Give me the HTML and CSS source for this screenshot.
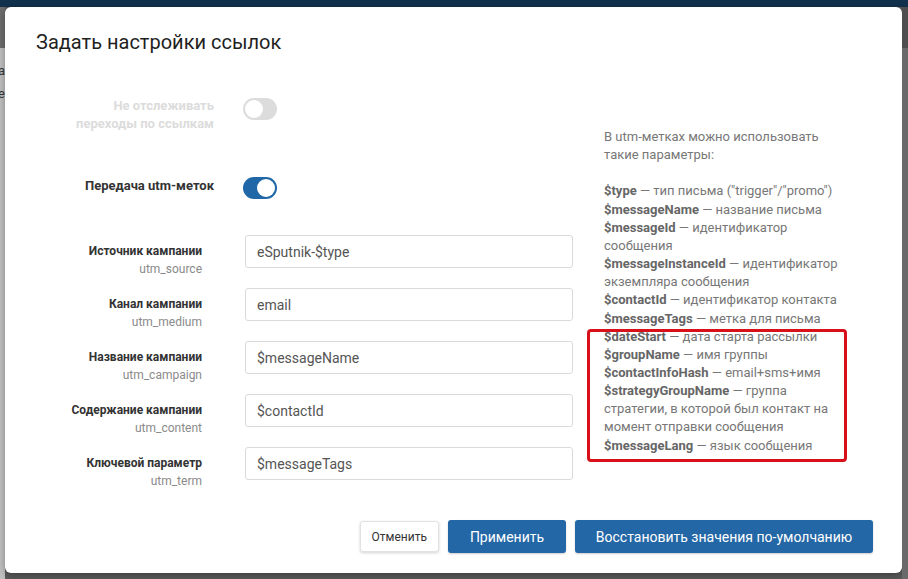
FILE: index.html
```html
<!DOCTYPE html>
<html lang="ru">
<head>
<meta charset="utf-8">
<title>Задать настройки ссылок</title>
<link rel="stylesheet" href="styles.css">
</head>
<body>
<div class="topbar"></div>
<div class="stage">
  <div class="side side-left"><span>a</span><span>e</span></div>
  <div class="dialog">
    <h1 class="title">Задать настройки ссылок</h1>
    <div class="content">
      <div class="form">
        <div class="row row-first">
          <div class="label label-disabled">Не отслеживать<br>переходы по ссылкам</div>
          <div class="control"><span class="toggle toggle-off"><span class="knob"></span></span></div>
        </div>
        <div class="row row-second">
          <div class="label">Передача utm-меток</div>
          <div class="control"><span class="toggle toggle-on"><span class="knob"></span></span></div>
        </div>
        <div class="fields">
          <div class="row row-input">
            <div class="label">Источник кампании<span class="sub">utm_source</span></div>
            <div class="control"><input class="input" type="text" value="eSputnik-$type"></div>
          </div>
          <div class="row row-input">
            <div class="label">Канал кампании<span class="sub">utm_medium</span></div>
            <div class="control"><input class="input" type="text" value="email"></div>
          </div>
          <div class="row row-input">
            <div class="label">Название кампании<span class="sub">utm_campaign</span></div>
            <div class="control"><input class="input" type="text" value="$messageName"></div>
          </div>
          <div class="row row-input">
            <div class="label">Содержание кампании<span class="sub">utm_content</span></div>
            <div class="control"><input class="input" type="text" value="$contactId"></div>
          </div>
          <div class="row row-input">
            <div class="label">Ключевой параметр<span class="sub">utm_term</span></div>
            <div class="control"><input class="input" type="text" value="$messageTags"></div>
          </div>
        </div>
      </div>
      <div class="help">
        <p class="help-intro">В utm-метках можно использовать<br>такие параметры:</p>
        <p class="help-list">
          <b>$type</b> — тип письма ("trigger"/"promo")<br>
          <b>$messageName</b> — название письма<br>
          <b>$messageId</b> — идентификатор<br>сообщения<br>
          <b>$messageInstanceId</b> — идентификатор<br>экземпляра сообщения<br>
          <b>$contactId</b> — идентификатор контакта<br>
          <b>$messageTags</b> — метка для письма
        </p>
        <p class="help-list highlight">
          <b>$dateStart</b> — дата старта рассылки<br>
          <b>$groupName</b> — имя группы<br>
          <b>$contactInfoHash</b> — email+sms+имя<br>
          <b>$strategyGroupName</b> — группа<br>стратегии, в которой был контакт на<br>момент отправки сообщения<br>
          <b>$messageLang</b> — язык сообщения
        </p>
      </div>
    </div>
    <div class="footer">
      <button class="btn btn-cancel" type="button">Отменить</button>
      <button class="btn btn-primary btn-apply" type="button">Применить</button>
      <button class="btn btn-primary btn-reset" type="button">Восстановить значения по-умолчанию</button>
    </div>
  </div>
  <div class="side side-right"></div>
</div>
</body>
</html>
```

FILE: styles.css
```css
* { box-sizing: border-box; }

html, body {
  margin: 0;
  padding: 0;
}

body {
  width: 908px;
  height: 579px;
  overflow: hidden;
  background: #5b5b5b;
  font-family: Roboto, "Liberation Sans", Arial, sans-serif;
  color: #333;
}

.topbar {
  height: 7px;
  background: #11314d;
}

.stage {
  display: flex;
  align-items: flex-start;
}

.side {
  flex: 0 0 5px;
  height: 572px;
}

.side-left {
  width: 5px;
  background: linear-gradient(#6e6e6e 0, #6e6e6e 41px, #c2c2c2 41px, #c2c2c2 100%);
  display: flex;
  flex-direction: column;
  padding-top: 52px;
  overflow: hidden;
  font-size: 13px;
  line-height: 23px;
  color: #3a3a3a;
}

.side-left span {
  margin-left: -2px;
}

.side-right {
  flex: 0 0 6px;
  background: linear-gradient(#4e4e4e 0, #4e4e4e 41px, #6a6a6a 41px, #6a6a6a 100%);
}

.dialog {
  width: 897px;
  height: 566px;
  background: #fff;
  border-radius: 6px;
  box-shadow: 0 2px 8px rgba(0, 0, 0, 0.35);
  display: flex;
  flex-direction: column;
  padding: 23px 29px 20px 31px;
}

.title {
  margin: 0;
  font-size: 20px;
  line-height: 24px;
  font-weight: 400;
  color: #1f1f1f;
}

.content {
  display: flex;
  gap: 31px;
  margin-top: 43px;
}

.form {
  width: 537px;
  display: flex;
  flex-direction: column;
}

.row {
  display: grid;
  grid-template-columns: 178px 330px;
  column-gap: 29px;
  align-items: start;
}

.label {
  text-align: right;
  font-size: 13px;
  line-height: 18px;
  font-weight: 700;
  color: #333;
}

.label-disabled {
  color: #dcdcdc;
}

.sub {
  display: block;
  font-weight: 400;
  color: #8a8a8a;
}

.row-first .control { padding-top: 1px; }
.row-second { margin-top: 44px; }

.fields {
  margin-top: 36px;
  display: flex;
  flex-direction: column;
  gap: 20px;
}

.row-input {
  grid-template-columns: 166px 330px;
  column-gap: 43px;
  height: 33px;
}

.row-input .label {
  padding-top: 7px;
  font-size: 12px;
}

.toggle {
  position: relative;
  display: block;
  width: 34px;
  height: 22px;
  border-radius: 11px;
}

.toggle .knob {
  position: absolute;
  top: 2px;
  width: 18px;
  height: 18px;
  border-radius: 50%;
  background: #fff;
}

.toggle-off { background: #dcdcdc; }
.toggle-off .knob { left: 2px; }

.toggle-on { background: #1f67a6; }
.toggle-on .knob { right: 2px; }

.input {
  display: block;
  width: 328px;
  height: 33px;
  border: 1px solid #dadada;
  border-radius: 3px;
  padding: 0 11px;
  font-family: inherit;
  font-size: 14px;
  color: #555;
  background: #fff;
  outline: none;
}

.help {
  width: 250px;
  padding-top: 31px;
  font-size: 13px;
  line-height: 18.15px;
  color: #777;
  white-space: nowrap;
}

.help p {
  margin: 0;
}

.help-intro {
  margin-bottom: 18.15px !important;
}

.help b {
  font-weight: 700;
  color: #666;
}

.highlight {
  position: relative;
}

.highlight::before {
  content: "";
  position: absolute;
  left: -17px;
  top: 1px;
  width: 254px;
  height: 127px;
  border: 3px solid #d8101a;
  border-radius: 4px;
}

.footer {
  margin-top: auto;
  display: flex;
  justify-content: flex-end;
  align-items: center;
  gap: 9px;
}

.btn {
  font-family: inherit;
  border-radius: 3px;
  cursor: pointer;
}

.btn-cancel {
  height: 31px;
  padding: 0 11px;
  font-size: 12px;
  color: #333;
  background: #fff;
  border: 1px solid #e2e2e2;
  box-shadow: 0 1px 3px rgba(0, 0, 0, 0.18);
}

.btn-primary {
  height: 33px;
  font-size: 14px;
  color: #fff;
  background: #2467a6;
  border: none;
  box-shadow: 0 1px 2px rgba(0, 0, 0, 0.2);
}

.btn-apply { width: 118px; }
.btn-reset { width: 298px; }
```
